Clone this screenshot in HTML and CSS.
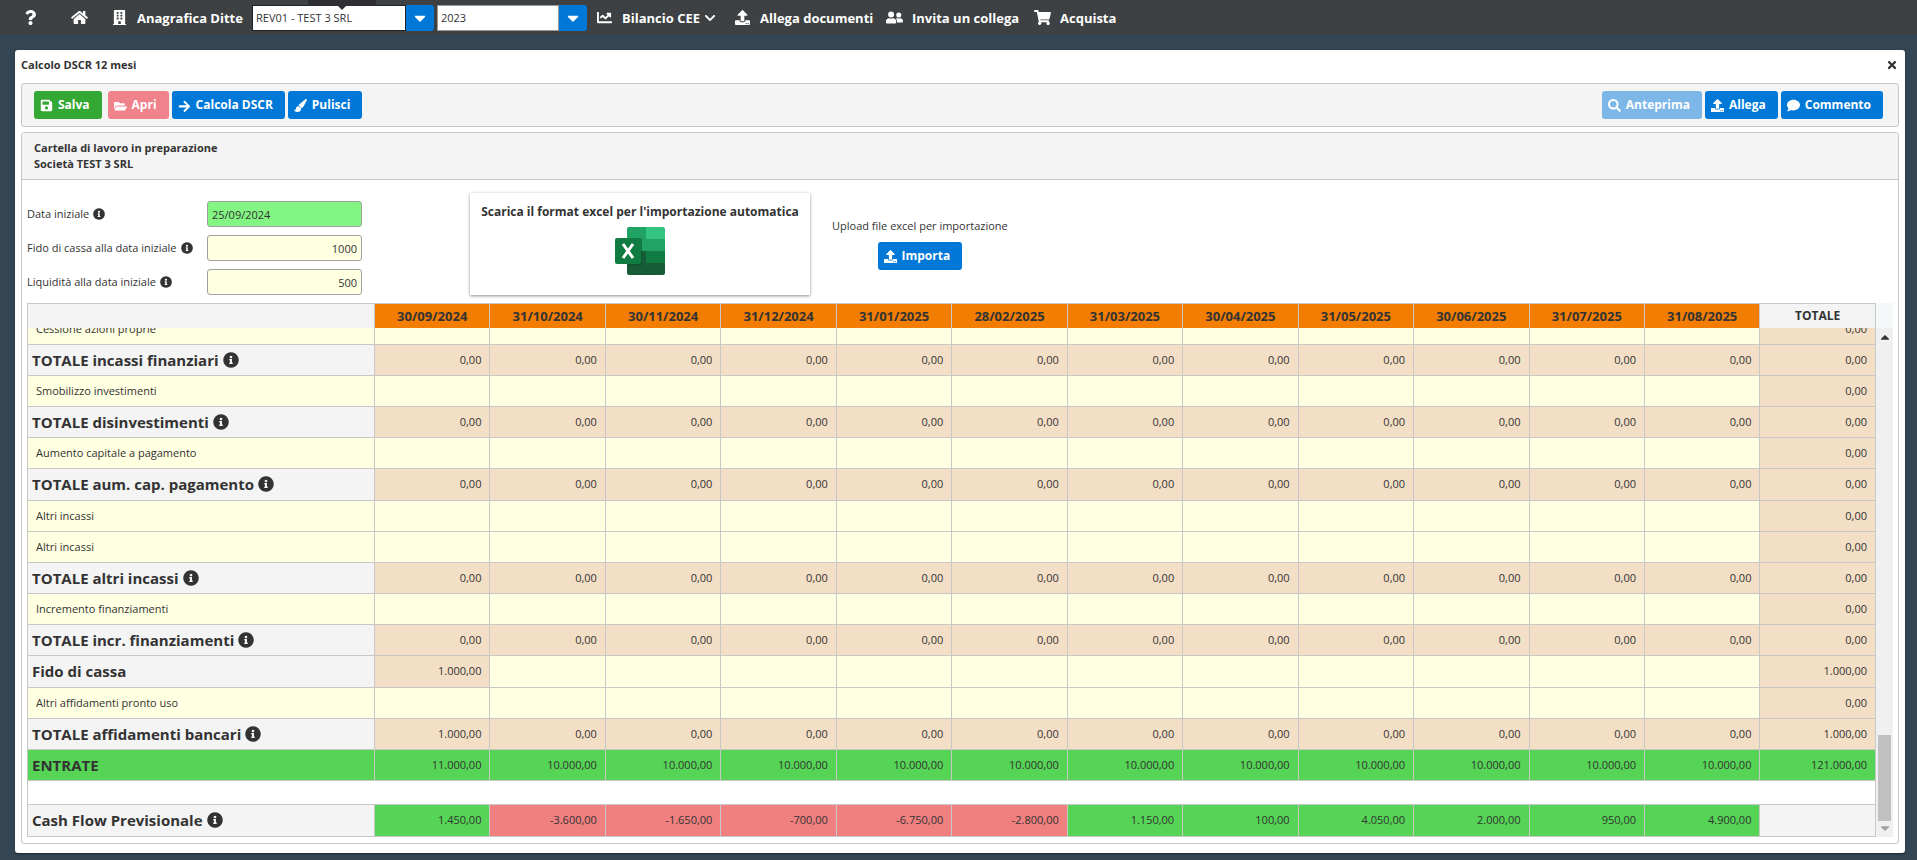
FILE: index.html
```html
<!DOCTYPE html>
<html lang="it">
<head>
<meta charset="utf-8">
<title>Calcolo DSCR 12 mesi</title>
<link rel="stylesheet" href="styles.css">
</head>
<body>
<svg class="sprite" aria-hidden="true">
  <symbol id="i-question" viewBox="0 0 384 512"><path d="M202 0C122 0 70 33 29 91c-7 11-5 25 5 33l43 33c11 8 25 6 33-4 25-32 44-50 83-50 31 0 69 20 69 50 0 22-19 34-49 51-35 20-82 44-82 106v10c0 13 11 24 24 24h73c13 0 24-11 24-24v-6c0-43 125-44 125-160C377 67 287 0 202 0zM192 373c-38 0-70 31-70 69s32 70 70 70 70-31 70-70-32-69-70-69z"/></symbol>
  <symbol id="i-home" viewBox="0 0 576 512"><path d="M488 312v144c0 13-11 24-24 24H348c-7 0-12-5-12-12V356c0-7-5-12-12-12h-72c-7 0-12 5-12 12v112c0 7-5 12-12 12H112c-13 0-24-11-24-24V312c0-4 2-7 4-9l188-155c5-4 11-4 16 0l188 155c2 2 4 5 4 9zm84-61l-84-69V44c0-7-5-12-12-12h-56c-7 0-12 5-12 12v72l-90-74c-17-14-43-14-60 0L4 251c-5 4-6 12-2 17l26 31c4 5 12 6 17 2L280 107c5-4 11-4 16 0l235 194c5 4 13 3 17-2l26-31c4-5 3-13-2-17z"/></symbol>
  <symbol id="i-building" viewBox="0 0 448 512"><path fill-rule="evenodd" d="M436 480h-20V24c0-13-11-24-24-24H56C43 0 32 11 32 24v456H12c-7 0-12 5-12 12v20h448v-20c0-7-5-12-12-12zM128 64h64v64h-64zm128 0h64v64h-64zM128 160h64v64h-64zm128 0h64v64h-64zM128 256h64v64h-64zm128 0h64v64h-64zM180 384h88v96h-88z"/></symbol>
  <symbol id="i-caret" viewBox="0 0 320 512"><path d="M31 192h258c18 0 27 21 14 34L174 355c-8 8-20 8-28 0L17 226c-13-13-4-34 14-34z"/></symbol>
  <symbol id="i-caret-up" viewBox="0 0 320 512"><path d="M289 352H31c-18 0-27-21-14-34l129-129c8-8 20-8 28 0l129 129c13 13 4 34-14 34z"/></symbol>
  <symbol id="i-chart" viewBox="0 0 512 512"><path d="M496 384H64V80c0-9-7-16-16-16H16C7 64 0 71 0 80v336c0 18 14 32 32 32h464c9 0 16-7 16-16v-32c0-9-7-16-16-16zM464 96H346c-22 0-32 26-17 41l32 32-73 74-73-74c-13-12-33-12-46 0l-68 69c-6 6-6 16 0 22l23 23c6 6 16 6 22 0l46-46 73 74c13 12 33 12 46 0l96-97 32 32c15 15 41 5 41-17V112c0-9-7-16-16-16z"/></symbol>
  <symbol id="i-chevron" viewBox="0 0 448 512"><path d="M207 381L13 187c-9-9-9-25 0-34l23-22c9-10 24-10 33 0l155 154 155-154c9-10 24-10 33 0l23 22c9 9 9 25 0 34L241 381c-9 10-25 10-34 0z"/></symbol>
  <symbol id="i-upload" viewBox="0 0 512 512"><path fill-rule="evenodd" d="M296 384h-80c-13 0-24-11-24-24V192h-88c-18 0-27-21-14-34L242 6c7-8 20-8 28 0l152 152c13 13 4 34-14 34h-88v168c0 13-11 24-24 24zm216-8v112c0 13-11 24-24 24H24c-13 0-24-11-24-24V376c0-13 11-24 24-24h136v8c0 31 25 56 56 56h80c31 0 56-25 56-56v-8h136c13 0 24 11 24 24zM388 444a20 20 0 1 0 .1 0zm64 0a20 20 0 1 0 .1 0z"/></symbol>
  <symbol id="i-users" viewBox="0 0 640 512"><path d="M192 256a112 112 0 1 0 0-224 112 112 0 0 0 0 224zm77 32h-8c-42 20-94 20-138 0h-8C52 288 0 340 0 403v29c0 27 21 48 48 48h288c27 0 48-21 48-48v-29c0-63-52-115-115-115zm211-32a96 96 0 1 0 0-192 96 96 0 0 0 0 192zm48 32h-4c-28 10-60 10-88 0h-4c-20 0-39 6-56 16 25 27 40 62 40 102v42h176c27 0 48-21 48-48 0-62-50-112-112-112z"/></symbol>
  <symbol id="i-cart" viewBox="0 0 576 512"><path d="M528 301l47-208c4-15-8-29-23-29H159l-9-45c-2-11-12-19-23-19H24C11 0 0 11 0 24v16c0 13 11 24 24 24h70l70 343a56 56 0 1 0 67 9h210a56 56 0 1 0 64-10l5-25c4-15-8-29-23-29H218l-7-32h294c11 0 21-8 23-19z"/></symbol>
  <symbol id="i-save" viewBox="0 0 448 512"><path fill-rule="evenodd" d="M434 130l-84-84c-9-9-21-14-34-14H48C21 32 0 53 0 80v352c0 27 21 48 48 48h352c27 0 48-21 48-48V164c0-13-5-25-14-34zM224 416a64 64 0 1 1 0-128 64 64 0 0 1 0 128zm96-192H72c-5 0-8-3-8-8v-112c0-5 3-8 8-8h248z"/></symbol>
  <symbol id="i-folder" viewBox="0 0 576 512"><path d="M573 332l-72 124c-9 15-25 24-42 24H45c-19 0-31-20-21-36l72-124c9-15 25-24 42-24h414c18 0 30 20 21 36zM152 256h328v-48c0-27-21-48-48-48H272l-64-64H48c-27 0-48 21-48 48v278l69-118c17-30 49-48 83-48z"/></symbol>
  <symbol id="i-arrow" viewBox="0 0 448 512"><path d="M190 101l22-22c10-9 25-9 34 0l195 194c9 10 9 25 0 34L246 501c-9 10-24 10-34 0l-22-22c-9-10-9-25 1-34l120-115H24c-13 0-24-11-24-24v-32c0-13 11-24 24-24h287L191 135c-10-9-10-24-1-34z"/></symbol>
  <symbol id="i-brush" viewBox="0 0 512 512"><path d="M168 290c-62 0-92 45-92 99 0 27-25 45-50 34-9-4-17-9-26-16 0 60 54 105 132 105 90 0 151-50 151-130 0-11-1-22-4-32zM480 0c-14 0-27 6-37 15C213 202 185 210 185 258c0 4 0 8 1 12l110 84c38-7 77-44 137-171l74-141c12-20-7-42-27-42z"/></symbol>
  <symbol id="i-search" viewBox="0 0 512 512"><path fill-rule="evenodd" d="M505 443L405 343c-4-4-11-7-17-7h-16a208 208 0 1 0-36 36v16c0 6 3 13 7 17l100 100c9 9 24 9 34 0l28-28c9-10 9-25 0-34zM208 336a128 128 0 1 1 0-256 128 128 0 0 1 0 256z"/></symbol>
  <symbol id="i-comment" viewBox="0 0 512 512"><path d="M256 32C115 32 0 125 0 240c0 50 21 95 57 131-12 50-54 95-55 95-2 3-3 6-1 9s4 5 7 5c66 0 116-32 141-51 32 12 69 19 107 19 141 0 256-93 256-208S397 32 256 32z"/></symbol>
  <symbol id="i-info" viewBox="0 0 512 512"><path fill-rule="evenodd" d="M256 8a248 248 0 1 0 .1 0zm0 110a42 42 0 1 1-.1 0zm56 254c0 7-5 12-12 12h-88c-7 0-12-5-12-12v-24c0-7 5-12 12-12h12v-64h-12c-7 0-12-5-12-12v-24c0-7 5-12 12-12h64c7 0 12 5 12 12v100h12c7 0 12 5 12 12z"/></symbol>
  <symbol id="i-times" viewBox="0 0 352 512"><path d="M243 256l100-100c12-12 12-32 0-44l-22-23c-13-12-33-12-45 0L176 189 76 89c-12-12-32-12-45 0L9 112c-12 12-12 32 0 44l100 100L9 356c-12 12-12 32 0 45l22 22c13 12 33 12 45 0l100-100 100 100c12 12 32 12 45 0l22-22c12-13 12-33 0-45z"/></symbol>
</svg>

<header class="topbar">
  <a class="nav nav-help" href="#" aria-label="Aiuto"><svg class="ico"><use href="#i-question"/></svg></a>
  <a class="nav nav-home" href="#" aria-label="Home"><svg class="ico"><use href="#i-home"/></svg></a>
  <a class="nav nav-firms" href="#"><svg class="ico"><use href="#i-building"/></svg>Anagrafica Ditte</a>
  <div class="combo combo-firm"><span class="tip"></span><input type="text" value="REV01 - TEST 3 SRL" aria-label="Ditta"><button type="button" aria-label="Apri elenco ditte"><svg class="ico"><use href="#i-caret"/></svg></button></div>
  <div class="combo combo-year"><input type="text" value="2023" aria-label="Anno"><button type="button" aria-label="Apri elenco anni"><svg class="ico"><use href="#i-caret"/></svg></button></div>
  <a class="nav nav-cee" href="#"><svg class="ico"><use href="#i-chart"/></svg>Bilancio CEE<svg class="ico chev"><use href="#i-chevron"/></svg></a>
  <a class="nav nav-docs" href="#"><svg class="ico"><use href="#i-upload"/></svg>Allega documenti</a>
  <a class="nav nav-invite" href="#"><svg class="ico"><use href="#i-users"/></svg>Invita un collega</a>
  <a class="nav nav-buy" href="#"><svg class="ico"><use href="#i-cart"/></svg>Acquista</a>
</header>

<main class="window">
  <div class="titlebar">
    <h1>Calcolo DSCR 12 mesi</h1>
    <button type="button" class="close" aria-label="Chiudi"><svg class="ico"><use href="#i-times"/></svg></button>
  </div>

  <div class="toolbar">
    <button type="button" class="btn green"><svg class="ico"><use href="#i-save"/></svg>Salva</button>
    <button type="button" class="btn red"><svg class="ico"><use href="#i-folder"/></svg>Apri</button>
    <button type="button" class="btn"><svg class="ico"><use href="#i-arrow"/></svg>Calcola DSCR</button>
    <button type="button" class="btn"><svg class="ico"><use href="#i-brush"/></svg>Pulisci</button>
    <span class="spacer"></span>
    <button type="button" class="btn" disabled><svg class="ico"><use href="#i-search"/></svg>Anteprima</button>
    <button type="button" class="btn"><svg class="ico"><use href="#i-upload"/></svg>Allega</button>
    <button type="button" class="btn"><svg class="ico"><use href="#i-comment"/></svg>Commento</button>
  </div>

  <section class="sheet">
    <div class="sheet-head"><p>Cartella di lavoro in preparazione</p><p>Società TEST 3 SRL</p></div>
    <div class="setup">
      <div class="fields">
        <label for="f-date">Data iniziale <svg class="ico"><use href="#i-info"/></svg></label>
        <input id="f-date" class="date" type="text" value="25/09/2024">
        <label for="f-fido">Fido di cassa alla data iniziale <svg class="ico"><use href="#i-info"/></svg></label>
        <input id="f-fido" type="text" value="1000">
        <label for="f-liq">Liquidità alla data iniziale <svg class="ico"><use href="#i-info"/></svg></label>
        <input id="f-liq" type="text" value="500">
      </div>
      <a class="card" href="#">
        <span>Scarica il format excel per l'importazione automatica</span>
        <svg class="excel" viewBox="0 0 50 48" aria-label="Excel">
          <path fill="#21a366" d="M12 2a2 2 0 0 1 2-2h17v12H12z"/><path fill="#33c481" d="M31 0h17a2 2 0 0 1 2 2v10H31z"/>
          <path fill="#21a366" d="M12 12h38v12H12z"/><path fill="#107c41" d="M12 24h38v12H12z"/>
          <path fill="#185c37" d="M12 24h19v12h19v10a2 2 0 0 1-2 2H14a2 2 0 0 1-2-2z"/>
          <path fill="#0b4a2a" opacity=".5" d="M12 11h13a2 2 0 0 1 2 2v24a2 2 0 0 1-2 2H12z"/>
          <rect y="11" width="26" height="26" rx="2" fill="#107c41"/>
          <path fill="none" stroke="#fff" stroke-width="3" d="M8 17l10 14M18 17L8 31"/>
        </svg>
      </a>
      <div class="upload"><p>Upload file excel per importazione</p>
        <button type="button" class="btn"><svg class="ico"><use href="#i-upload"/></svg>Importa</button></div>
    </div>

    <div class="grid">
      <div class="grid-head"><table><colgroup><col class="c-name"><col span="13"></colgroup><thead id="head"></thead></table></div>
      <div class="grid-view">
        <div class="grid-body"><table><colgroup><col class="c-name"><col span="13"></colgroup><tbody id="body"></tbody></table></div>
        <div class="scroll"><svg class="ico"><use href="#i-caret-up"/></svg><span class="thumb"></span><svg class="ico off"><use href="#i-caret"/></svg></div>
      </div>
    </div>
  </section>
</main>
<script src="script.js"></script>
</body>
</html>
```
FILE: styles.css
```css
* { box-sizing: border-box; }
body { margin: 0; min-height: 100vh; background: #344654; color: #333; font: 11px/16px "Open Sans", "Noto Sans", sans-serif; }
p, h1 { margin: 0; }
button, input { font: inherit; color: inherit; margin: 0; border: 0; }
button { padding: 0; }
a { color: inherit; text-decoration: none; }
.sprite { position: absolute; width: 0; height: 0; }
.ico { width: 14px; height: 14px; fill: currentColor; flex: none; }

.topbar { display: flex; align-items: center; height: 35px; padding: 0 22px; background: #3e4143; color: #fff; font-size: 13px; font-weight: 700; }
.nav { display: flex; align-items: center; gap: 9px; white-space: nowrap; }
.nav .ico { width: 17px; height: 15px; }
.nav-help { width: 49px; }
.nav-home { width: 40px; }
.nav-firms { width: 141px; }
.nav-cee { width: 138px; }
.nav-cee .chev { width: 12px; height: 12px; margin-left: -5px; }
.nav-docs { width: 152px; }
.nav-invite { width: 148px; }
.combo { position: relative; display: flex; height: 26px; margin-right: 3px; font-size: 11px; font-weight: 400; color: #333; }
.combo input { width: 154px; padding: 0 3px; background: #fff; border: 1px solid #222; }
.combo button { width: 28px; background: #0078d7; color: #fff; display: flex; align-items: center; justify-content: center; border-radius: 0 3px 3px 0; }
.combo button .ico { width: 18px; height: 18px; }
.combo-year { margin-right: 9px; }
.combo-year input { width: 122px; border-color: #999; }
.tip { position: absolute; top: -5px; left: 56px; width: 68px; height: 6px; background: #2d2f33; border-radius: 0 0 3px 3px; }
.tip::after { content: ""; position: absolute; left: 30px; top: 6px; border: 4px solid transparent; border-top-color: #2d2f33; border-bottom: 0; }

.window { margin: 15px 12px 6px 15px; padding: 0 6px 9px; background: #fff; border-radius: 3px; box-shadow: 0 1px 2px #1c2730; }
.titlebar { display: flex; justify-content: space-between; align-items: center; height: 33px; padding-bottom: 4px; }
h1 { font-size: 11px; font-weight: 700; }
.close { background: none; display: flex; }
.close .ico { height: 12px; }
.toolbar { display: flex; align-items: center; gap: 3px; height: 44px; margin-bottom: 5px; padding: 0 15px 0 12px; background: #f4f4f4; border: 1px solid #c8c8c8; border-radius: 3px; }
.spacer { flex: 1; }
.btn { display: inline-flex; align-items: center; gap: 5px; height: 28px; padding: 0 12px 0 6px; background: #0078d7; color: #fff; font-size: 12px; font-weight: 700; border-radius: 3px; white-space: nowrap; }
.btn .ico { width: 13px; height: 13px; }
.btn.green { background: #34a834; margin-right: 3px; }
.btn.red { background: #f0828c; }
.btn:disabled { background: #7db7e8; }

.sheet { border: 1px solid #c8c8c8; border-radius: 3px; padding-bottom: 6px; }
.sheet-head { height: 47px; padding: 7px 12px; background: #f4f4f4; border-bottom: 1px solid #c8c8c8; font-weight: 700; }
.setup { display: flex; height: 123px; padding: 13px 5px 0; }
.fields { display: grid; grid-template-columns: 180px 155px; grid-auto-rows: 26px; row-gap: 8px; align-content: start; align-items: center; padding-top: 8px; margin-right: 108px; }
.fields label { display: flex; align-items: center; gap: 4px; white-space: nowrap; }
.fields .ico { width: 12px; height: 12px; }
.fields input { height: 26px; padding: 0 4px; background: #ffffe1; border: 1px solid #a0a0a0; border-radius: 3px; text-align: right; min-width: 0; }
.fields .date { background: #82f582; text-align: left; }
.card { display: flex; flex-direction: column; align-items: center; gap: 7px; width: 340px; height: 102px; padding-top: 11px; box-shadow: 0 1px 3px #8a929a; font-size: 12px; font-weight: 700; white-space: nowrap; }
.excel { width: 50px; height: 48px; }
.upload { display: flex; flex-direction: column; align-items: center; gap: 8px; margin-left: 22px; padding-top: 25px; }

.grid { margin: 0 5px; }
.grid table { width: 100%; table-layout: fixed; border-collapse: collapse; }
.c-name { width: 347px; }
.grid-head { padding-right: 17px; background: #f4f8f8; }
.grid-head th { height: 24px; padding: 0; background: #f27d00; border: 1px solid #c8c8c8; border-bottom: 0; font-size: 13px; font-weight: 700; }
.grid-head th:first-child, .grid-head th:last-child { background: #f4f4f4; }
.grid-head th:last-child { font-size: 12px; }
.grid-view { display: flex; height: 509px; }
.grid-body { flex: 1; min-width: 0; overflow: hidden; display: flex; flex-direction: column; justify-content: flex-end; }
.grid-body table { height: 524px; flex: none; }
.grid-body td, .grid-body th { height: 31px; padding: 0 8px; border: 1px solid #c8c8c8; text-align: right; font-size: 11px; font-weight: 400; white-space: nowrap; }
.grid-body th { text-align: left; background: #ffffe1; }
.grid-body .big th { padding: 0 4px; background: #f4f4f4; font-size: 15px; font-weight: 700; }
.grid-body .in { background: #ffffe1; }
.grid-body .calc { background: #f3dfc6; }
.grid-body .pos, .grid-body .entrate th { background: #55d455; }
.grid-body .neg { background: #f08080; }
.grid-body .none { background: #f4f4f4; }
.grid-body .gap td { height: 24px; background: #fff; }
.grid-body .ico { width: 16px; height: 16px; margin-left: 4px; vertical-align: -2px; }
.scroll { display: flex; flex-direction: column; align-items: center; width: 17px; padding: 2px 0; background: #f0f0f0; }
.thumb { width: 13px; height: 86px; margin-top: auto; background: #c1c1c1; }
.off { color: #a0a0a0; }
```
FILE: script.js
```js
const dates = ["30/09/2024", "31/10/2024", "30/11/2024", "31/12/2024", "31/01/2025", "28/02/2025",
  "31/03/2025", "30/04/2025", "31/05/2025", "30/06/2025", "31/07/2025", "31/08/2025"];
const fill = (v, n = 12) => Array(n).fill(v);
const zero = fill("0,00");
const info = '<svg class="ico"><use href="#i-info"/></svg>';

const rows = [
  { name: "Cessione azioni proprie" },
  { name: "TOTALE incassi finanziari", big: true, info: true, values: zero },
  { name: "Smobilizzo investimenti" },
  { name: "TOTALE disinvestimenti", big: true, info: true, values: zero },
  { name: "Aumento capitale a pagamento" },
  { name: "TOTALE aum. cap. pagamento", big: true, info: true, values: zero },
  { name: "Altri incassi" },
  { name: "Altri incassi" },
  { name: "TOTALE altri incassi", big: true, info: true, values: zero },
  { name: "Incremento finanziamenti" },
  { name: "TOTALE incr. finanziamenti", big: true, info: true, values: zero },
  { name: "Fido di cassa", big: true, values: ["1.000,00", ...fill("", 11)], total: "1.000,00" },
  { name: "Altri affidamenti pronto uso" },
  { name: "TOTALE affidamenti bancari", big: true, info: true, values: ["1.000,00", ...fill("0,00", 11)], total: "1.000,00" },
  { name: "ENTRATE", big: true, cls: "entrate", kind: "pos", values: ["11.000,00", ...fill("10.000,00", 11)], total: "121.000,00" },
  null,
  { name: "Cash Flow Previsionale", big: true, info: true, kind: "sign", total: "",
    values: ["1.450,00", "-3.600,00", "-1.650,00", "-700,00", "-6.750,00", "-2.800,00",
      "1.150,00", "100,00", "4.050,00", "2.000,00", "950,00", "4.900,00"] }
];

function cellClass(row, v) {
  if (row.kind === "sign") return v.startsWith("-") ? "neg" : "pos";
  return row.kind || (v ? "calc" : "in");
}

document.getElementById("head").innerHTML =
  "<tr><th></th>" + dates.map(d => `<th scope="col">${d}</th>`).join("") + '<th scope="col">TOTALE</th></tr>';

document.getElementById("body").innerHTML = rows.map(row => {
  if (!row) return '<tr class="gap"><td colspan="14"></td></tr>';
  const values = row.values || fill("");
  const totalClass = row.kind === "sign" ? "none" : row.kind || "calc";
  return `<tr class="${row.big ? "big" : ""} ${row.cls || ""}"><th scope="row">${row.name}${row.info ? info : ""}</th>` +
    values.map(v => `<td class="${cellClass(row, v)}">${v}</td>`).join("") +
    `<td class="${totalClass}">${row.total ?? "0,00"}</td></tr>`;
}).join("");
```
